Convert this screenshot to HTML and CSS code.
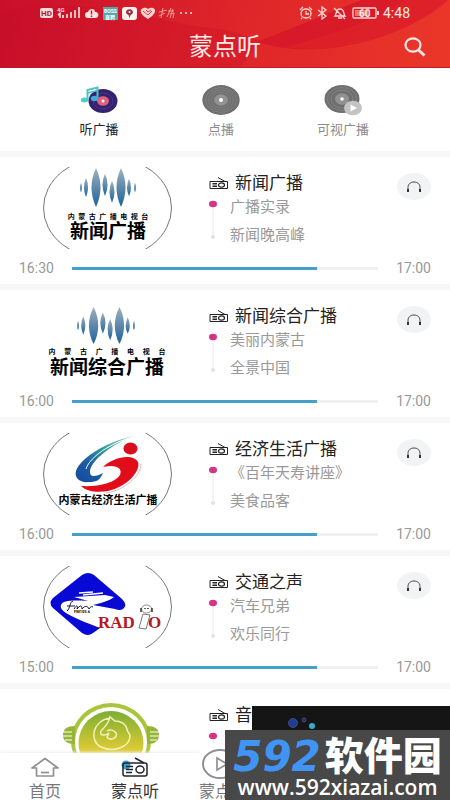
FILE: index.html
```
<!DOCTYPE html>
<html lang="zh-CN">
<head>
    <meta charset="UTF-8">
    <meta name="viewport" content="width=device-width, initial-scale=1.0">
    <title>蒙点听</title>
    <link rel="stylesheet" href="styles.css">
</head>
<body>
    <!-- shared icons -->
    <svg class="sprite" aria-hidden="true">
        <defs>
            <linearGradient id="waveFill" x1="0" y1="0" x2="0" y2="1">
                <stop offset="0" stop-color="#9fb0bd"/>
                <stop offset="1" stop-color="#1d6299"/>
            </linearGradient>
            <symbol id="radio" viewBox="0 0 20 14">
                <path d="M1 5.500H18.500V12.500H1zM9 1.500L16 5.500M3.500 7.500H8M3.500 9H8M3.500 10.500H8" fill="none" stroke="currentColor"/>
                <ellipse cx="12.500" cy="9" rx="3" ry="2.200" fill="none" stroke="currentColor" stroke-width="1.200"/>
            </symbol>
            <symbol id="headphone" viewBox="0 0 16 12">
                <path d="M2 9V6.500C2 3 4.500 1 8 1S14 3 14 6.500V9" fill="none" stroke="#444"/>
                <path d="M1 8h2v3h-2zM13 8h2v3h-2z" fill="#333"/>
            </symbol>
            <symbol id="timeline" viewBox="0 0 8 42">
                <path d="M4 5V38" stroke="#e8e8e8"/>
                <ellipse cx="4" cy="5" rx="4" ry="3.300" fill="#d63384"/>
                <circle cx="4" cy="38" r="2" fill="#e2e2e2"/>
            </symbol>
            <symbol id="wave" viewBox="0 0 58 42" preserveAspectRatio="none">
                <g fill="url(#waveFill)">
                    <path d="M2 16q2 5 0 10q-2-5 0-10z"/>
                    <path d="M7 11q4 10 0 20q-4-10 0-20z"/>
                    <path d="M17 1q9 20 0 40q-9-20 0-40z"/>
                    <path d="M26 7q5 11 0 23q-5-12 0-23z"/>
                    <path d="M33 14q5 11 0 23q-5-12 0-23z"/>
                    <path d="M42 1q9 20 0 40q-9-20 0-40z"/>
                    <path d="M50 12q4 9 0 18q-4-9 0-18z"/>
                    <path d="M56 16q2 5 0 10q-2-5 0-10z"/>
                </g>
            </symbol>
            <symbol id="frame" viewBox="0 0 129 82">
                <ellipse cx="64.500" cy="41" rx="64" ry="51.500" fill="none" stroke="#777"/>
            </symbol>
        </defs>
    </svg>

    <header class="header">
        <svg class="header-bg" viewBox="0 0 450 68" preserveAspectRatio="none" aria-hidden="true">
            <path d="M0 15C15 4 60 2 110 10S190 28 225 30L262 42L240 68H0z" fill="#c40c28" opacity=".25"/>
            <path d="M258 42C310 22 340 8 362 0H448C410 34 350 50 310 50C285 50 268 46 258 42z" fill="#d3132a" opacity=".7"/>
            <path d="M285 48C350 30 385 15 405 0H448C410 34 350 50 310 50z" fill="#e02428" opacity=".7"/>
        </svg>
        <div class="status">
            <svg width="154" height="16" viewBox="0 0 154 16">
                <rect x="1" y="3" width="13" height="10" rx="2" fill="#ffdad6"/>
                <text x="2" y="11" class="hd">HD</text>
                <text x="18" y="7" class="net">4G</text>
                <path d="M19 10l2-1.500v4.500M24 13v-3M28 13V9M32 13V7M36 13V5M40 13V2" stroke="#ffdad6" stroke-width="1.700" fill="none"/>
                <path d="M49 13a3 3 0 0 1 0-6c1-4 7-4 7 0c4-1 5 6 0 6z" fill="#ffe3e0"/>
                <path d="M52.500 5.500v4M52.500 10.500v1.500" stroke="#d21a28" stroke-width="1.500"/>
                <rect x="64" y="2" width="15" height="13" fill="#4fa9ad"/>
                <text x="65" y="8" class="boss">BOSS</text>
                <text x="66" y="14" class="boss">直聘</text>
                <rect x="83" y="2" width="15" height="13" rx="3" fill="#fff0ee"/>
                <path d="M90.500 13l-1-3a3.500 3 0 1 1 2 0z" fill="#943340"/>
                <circle cx="90.500" cy="7" r="1" fill="#fff"/>
                <path d="M109 14C95 6 105 0 109 4C114 0 122 6 109 14z" fill="#ffd3cf"/>
                <path d="M104 6l5 4l4-4M107 5l2 2l3-2" stroke="#dc3a40" fill="none"/>
                <path d="M120 7l8-2M124 3l-2 10M120 11l6-3M128 12l4-9M129 6h6M134 4l-3 9M131 9l4-1l-1 5" stroke="#f7a09a" fill="none"/>
                <path d="M141 8h2M146 8h2M151 8h2" stroke="#f7b3ad" stroke-width="2"/>
            </svg>
            <div class="status-right">
                <svg width="80" height="14" viewBox="0 0 80 14" fill="none" stroke="#ffd6d1" stroke-width="1.300">
                    <ellipse cx="7" cy="7.500" rx="5" ry="4.500"/>
                    <path d="M1 4l3-3M13 4l-3-3M7 5v3h3M3 12l-1 1M11 12l1 1"/>
                    <path d="M19 4l8 6l-4 3V1l4 3l-8 6"/>
                    <path d="M36 10c2-2 0-7 5-7s3 5 5 7zM39 12h4M35 2l11 11"/>
                    <rect x="54" y="2" width="23" height="10" rx="1"/>
                    <path d="M79 5v4" stroke-width="2"/>
                    <path d="M56 4h13v6H56z" fill="#e9776f" stroke="none"/>
                    <text x="60" y="11" class="battery">60</text>
                </svg>
                <span>4:48</span>
            </div>
        </div>
        <div class="title-bar">
            <h1>蒙点听</h1>
            <button class="search" type="button" aria-label="搜索">
                <svg width="22" height="20" viewBox="0 0 22 20" fill="none" stroke="#ffe7e3">
                    <ellipse cx="9" cy="8" rx="7.500" ry="6.700" stroke-width="2.200"/>
                    <path d="M14.500 13l6 5.500" stroke-width="3"/>
                </svg>
            </button>
        </div>
    </header>

    <nav class="tabs">
        <a class="tab active" href="#listen">
            <svg width="40" height="32" viewBox="0 0 40 32">
                <ellipse cx="24" cy="17" rx="14.500" ry="12" fill="#34216f"/>
                <ellipse cx="24" cy="17" rx="10" ry="8" fill="none" stroke="#4a3586"/>
                <ellipse cx="24" cy="17" rx="6" ry="4.800" fill="#e0607b"/>
                <circle cx="24" cy="17" r="1.500" fill="#fff"/>
                <path d="M8.500 16V6l10-2.500V14" fill="none" stroke="#4bc3c9" stroke-width="2"/>
                <path d="M8.500 9l10-2.500" stroke="#4bc3c9" stroke-width="1.500"/>
                <ellipse cx="5.500" cy="16" rx="3.700" ry="2.500" fill="#4ccfc5"/>
                <ellipse cx="15.500" cy="14.500" rx="3.700" ry="2.700" fill="#42abd5"/>
            </svg>
            <span>听广播</span>
        </a>
        <a class="tab" href="#demand">
            <svg width="40" height="32" viewBox="0 0 40 32">
                <ellipse cx="20" cy="16" rx="18.700" ry="15" fill="#6f6f6f"/>
                <g fill="none" stroke="#858585" stroke-width=".8">
                    <ellipse cx="20" cy="16" rx="15.500" ry="12.300"/>
                    <ellipse cx="20" cy="16" rx="12.500" ry="10"/>
                    <ellipse cx="20" cy="16" rx="9.500" ry="7.700"/>
                </g>
                <ellipse cx="20" cy="16" rx="7" ry="5.700" fill="#929292"/>
                <circle cx="20" cy="16" r="2" fill="#fff"/>
            </svg>
            <span>点播</span>
        </a>
        <a class="tab" href="#video">
            <svg width="40" height="32" viewBox="0 0 40 32">
                <ellipse cx="19" cy="15" rx="17.500" ry="14" fill="#6f6f6f"/>
                <g fill="none" stroke="#858585" stroke-width=".8">
                    <ellipse cx="19" cy="15" rx="14.500" ry="11.500"/>
                    <ellipse cx="19" cy="15" rx="11" ry="9"/>
                </g>
                <ellipse cx="19" cy="15" rx="7" ry="5.700" fill="#929292"/>
                <circle cx="19" cy="15" r="1.800" fill="#fff"/>
                <ellipse cx="30" cy="24" rx="9" ry="7.300" fill="#c3c3c3"/>
                <path d="M27.500 20.500l6.500 3.500l-6.500 3.500z" fill="#fff"/>
            </svg>
            <span>可视广播</span>
        </a>
    </nav>

    <main class="list">
        <article class="card">
            <div class="card-top">
                <svg class="logo" viewBox="0 0 129 82">
                    <use href="#frame"/>
                    <use href="#wave" x="36" y="0" width="58" height="41"/>
                    <text x="65" y="52" class="logo-small">内&nbsp;&nbsp;蒙&nbsp;&nbsp;古&nbsp;&nbsp;广&nbsp;&nbsp;播&nbsp;&nbsp;电&nbsp;&nbsp;视&nbsp;&nbsp;台</text>
                    <text x="65" y="71" class="logo-name">新闻广播</text>
                </svg>
                <div class="info">
                    <h2><svg class="radio"><use href="#radio"/></svg>新闻广播</h2>
                    <div class="programs">
                        <svg class="timeline"><use href="#timeline"/></svg>
                        <ul>
                            <li>广播实录</li>
                            <li>新闻晚高峰</li>
                        </ul>
                    </div>
                </div>
                <button class="play" type="button" aria-label="收听新闻广播"><svg width="16" height="12"><use href="#headphone"/></svg></button>
            </div>
            <div class="time">
                <span>16:30</span>
                <progress value="80" max="100" aria-label="播放进度"></progress>
                <span>17:00</span>
            </div>
        </article>

        <article class="card">
            <div class="card-top">
                <svg class="logo" viewBox="0 0 129 82">
                    <use href="#wave" x="33" y="6" width="60" height="39"/>
                    <text x="64" y="54" class="logo-small">内&nbsp;&nbsp;&nbsp;&nbsp;&nbsp;蒙&nbsp;&nbsp;&nbsp;&nbsp;&nbsp;古&nbsp;&nbsp;&nbsp;&nbsp;&nbsp;广&nbsp;&nbsp;&nbsp;&nbsp;&nbsp;播&nbsp;&nbsp;&nbsp;&nbsp;&nbsp;电&nbsp;&nbsp;&nbsp;&nbsp;&nbsp;视&nbsp;&nbsp;&nbsp;&nbsp;&nbsp;台</text>
                    <text x="64" y="74" class="logo-name">新闻综合广播</text>
                </svg>
                <div class="info">
                    <h2><svg class="radio"><use href="#radio"/></svg>新闻综合广播</h2>
                    <div class="programs">
                        <svg class="timeline"><use href="#timeline"/></svg>
                        <ul>
                            <li>美丽内蒙古</li>
                            <li>全景中国</li>
                        </ul>
                    </div>
                </div>
                <button class="play" type="button" aria-label="收听新闻综合广播"><svg width="16" height="12"><use href="#headphone"/></svg></button>
            </div>
            <div class="time">
                <span>16:00</span>
                <progress value="80" max="100" aria-label="播放进度"></progress>
                <span>17:00</span>
            </div>
        </article>

        <article class="card">
            <div class="card-top">
                <svg class="logo" viewBox="0 0 129 82">
                    <defs>
                        <linearGradient id="swoosh" x1="0" y1="1" x2="1" y2="0">
                            <stop offset="0" stop-color="#124a9c"/>
                            <stop offset=".3" stop-color="#1c5ca5"/>
                            <stop offset=".6" stop-color="#2f9a9a"/>
                            <stop offset="1" stop-color="#b9d4dc"/>
                        </linearGradient>
                    </defs>
                    <use href="#frame"/>
                    <path d="M90 3C60 10 37 26 33 38C31 45 37 50 46 49C54 49 57 47 60 40C54 43 48 45 47 40C46 30 64 14 90 3z" fill="url(#swoosh)"/>
                    <path d="M86 5C62 13 46 26 43 36" fill="none" stroke="#fff"/>
                    <ellipse cx="87.500" cy="15.500" rx="7" ry="6" fill="#dc0c1a"/>
                    <path d="M60 34C70 24 90 20 95 29C98 38 84 54 65 58C53 60 43 58 38 53C55 54 72 50 77 42C80 35 73 31 60 34z" fill="#e20d1b"/>
                    <path d="M98 31C98 43 82 57 63 60" fill="none" stroke="#dfb9ba"/>
                    <text x="65" y="71" class="logo-eco">内蒙古经济生活广播</text>
                </svg>
                <div class="info">
                    <h2><svg class="radio"><use href="#radio"/></svg>经济生活广播</h2>
                    <div class="programs">
                        <svg class="timeline"><use href="#timeline"/></svg>
                        <ul>
                            <li>《百年天寿讲座》</li>
                            <li>美食品客</li>
                        </ul>
                    </div>
                </div>
                <button class="play" type="button" aria-label="收听经济生活广播"><svg width="16" height="12"><use href="#headphone"/></svg></button>
            </div>
            <div class="time">
                <span>16:00</span>
                <progress value="80" max="100" aria-label="播放进度"></progress>
                <span>17:00</span>
            </div>
        </article>

        <article class="card">
            <div class="card-top">
                <svg class="logo" viewBox="0 0 129 82">
                    <use href="#frame"/>
                    <path d="M39 9Q45 5 51 9L79 33Q85 39 80 43Q77 45 72 43L50 39C58 37 66 35 71 31L62 29L31 31L45 35C30 34 20 34 18 39C16 45 26 50 57 62L50 67Q45 71 39 67L10 42Q5 37 10 32z" fill="#0909d6"/>
                    <path d="M36 27l14-1M40 29l20-2" stroke="#fff" stroke-width="1.500"/>
                    <path d="M24 45C27 43 27 35 30 35M24 40h8M31 43c3-5 4-3 3 0c3-4 5-4 5 0c3-4 6-3 7 0c2-2 1-3 4-2" fill="none" stroke="#151538"/>
                    <text x="31" y="47" class="logo-freq">FM105.6</text>
                    <text x="55" y="62" class="logo-radio">RAD</text>
                    <text x="105" y="62" class="logo-radio">O</text>
                    <path d="M100 48l7 1l-4 14l-7-1z" fill="#fff" stroke="#777"/>
                    <ellipse cx="103.500" cy="43" rx="5" ry="4" fill="#fff" stroke="#888"/>
                    <path d="M98 42v4M109 42v4M102 42v1M105 42v1" stroke="#333" stroke-width="1.500"/>
                </svg>
                <div class="info">
                    <h2><svg class="radio"><use href="#radio"/></svg>交通之声</h2>
                    <div class="programs">
                        <svg class="timeline"><use href="#timeline"/></svg>
                        <ul>
                            <li>汽车兄弟</li>
                            <li>欢乐同行</li>
                        </ul>
                    </div>
                </div>
                <button class="play" type="button" aria-label="收听交通之声"><svg width="16" height="12"><use href="#headphone"/></svg></button>
            </div>
            <div class="time">
                <span>15:00</span>
                <progress value="80" max="100" aria-label="播放进度"></progress>
                <span>17:00</span>
            </div>
        </article>

        <article class="card">
            <div class="card-top">
                <svg class="logo" viewBox="0 0 129 82">
                    <defs>
                        <linearGradient id="music" x1="0" y1="0" x2="0" y2="1">
                            <stop offset="0" stop-color="#7cae35"/>
                            <stop offset=".6" stop-color="#dcca34"/>
                        </linearGradient>
                    </defs>
                    <ellipse cx="68" cy="42" rx="40" ry="38" fill="#a9c63a"/>
                    <ellipse cx="68" cy="43" rx="36" ry="35" fill="#fff"/>
                    <ellipse cx="68" cy="44" rx="32.500" ry="32" fill="url(#music)"/>
                    <path d="M32 27C24 27 20 30 20 36S24 45 32 45zM104 27C112 27 116 30 116 36S112 45 104 45z" fill="#94b535"/>
                    <path d="M20 33h9M20 37h9M22 41h7M107 33h9M107 37h9M107 41h7" stroke="#fff"/>
                    <path d="M67 19C49 22 46 42 58 48C70 54 86 48 87 38C88 35 84 34 84 30C83 25 78 22 72 22L67 18C66 24 61 29 58 32C56 37 62 37 66 34L64 38C68 43 75 38 73 34C71 31 67 30 64 32" fill="none" stroke="#f2f3b4" stroke-width="1.500"/>
                </svg>
                <div class="info">
                    <h2><svg class="radio"><use href="#radio"/></svg>音</h2>
                    <div class="programs">
                        <svg class="timeline"><use href="#timeline"/></svg>
                    </div>
                </div>
            </div>
        </article>
    </main>

    <nav class="bottom">
        <a href="#home">
            <svg width="28" height="22" viewBox="0 0 28 22" fill="none" stroke="#8f8f95" stroke-width="1.700">
                <path d="M1 12L14 2.500L27 12H22.500V20H5.500V12z" stroke-linejoin="round"/>
                <path d="M10 16.500h8"/>
            </svg>
            <span>首页</span>
        </a>
        <a class="active" href="#listen">
            <svg width="28" height="22" viewBox="0 0 28 22" fill="none" stroke="#20242c" stroke-width="1.500">
                <circle cx="5" cy="9" r="4.500" fill="#3c9fd6" stroke="none"/>
                <rect x="2" y="7" width="24" height="13" rx="2"/>
                <path d="M14 2l9 5M5 10.500h7M5 13.500h7M5 16.500h6"/>
                <ellipse cx="19" cy="13.500" rx="4" ry="3.500"/>
            </svg>
            <span>蒙点听</span>
        </a>
        <a class="center" href="#play">
            <svg width="64" height="48" viewBox="0 0 64 48">
                <ellipse cx="32" cy="24" rx="30" ry="24" fill="#fff"/>
                <ellipse cx="27" cy="23" rx="17" ry="14" fill="none" stroke="#8f9095" stroke-width="2"/>
                <path d="M24 17l10 6l-10 6z" fill="none" stroke="#8f9095" stroke-width="1.700"/>
            </svg>
            <span>蒙点</span>
        </a>
    </nav>

    <aside class="watermark">
        <div class="dark">
            <svg width="40" height="24" viewBox="0 0 40 24">
                <circle cx="13" cy="17" r="4.500" fill="#1d3d99" stroke="#444c73"/>
                <circle cx="24" cy="14" r="2" fill="#28285b" stroke="#4d4782"/>
                <circle cx="32" cy="20" r="3" fill="#35acc8"/>
            </svg>
        </div>
        <div class="brand">
            <p class="name"><b>592</b>软件园</p>
            <p class="url">www.592xiazai.com</p>
        </div>
    </aside>
</body>
</html>
```
FILE: styles.css
```
* {
    box-sizing: border-box;
}

body {
    display: flex;
    flex-direction: column;
    position: relative;
    height: 100vh;
    margin: 0;
    overflow: hidden;
    background-color: #f7f7f7;
    color: #222;
    font-family: Roboto, "Noto Sans CJK SC", sans-serif;
    font-weight: 400;
}

h1, h2, p, ul {
    margin: 0;
    padding: 0;
    font-weight: 400;
}

ul {
    list-style: none;
}

a {
    color: inherit;
    text-decoration: none;
}

button {
    border: none;
    padding: 0;
}

svg {
    display: block;
    flex-shrink: 0;
}

.sprite {
    position: absolute;
    width: 0;
    height: 0;
}

/* header */
.header {
    position: relative;
    flex-shrink: 0;
    height: 68px;
    border-bottom: 1px solid #c2182a;
    background: linear-gradient(100deg, #c90f2b, #de2429 50%, #ea3729);
    color: #ffe9e6;
}

.header-bg {
    position: absolute;
    width: 100%;
    height: 100%;
}

.status {
    display: flex;
    position: relative;
    justify-content: space-between;
    align-items: center;
    height: 26px;
    padding: 0 40px 0 39px;
}

.status-right {
    display: flex;
    align-items: center;
    gap: 4px;
    font-size: 14px;
}

.hd {
    fill: #a92230;
    font-size: 8px;
    font-weight: 700;
}

.net {
    fill: #ffdad6;
    font-size: 6px;
    font-weight: 700;
}

.boss {
    fill: #fff;
    font-size: 5px;
    font-weight: 700;
}

.battery {
    fill: #ffe9e6;
    stroke: none;
    font-size: 10px;
    font-weight: 700;
}

.title-bar {
    display: grid;
    position: relative;
    grid-template-columns: 1fr auto 1fr;
    align-items: center;
    height: 42px;
    padding: 0 24px;
}

.title-bar h1 {
    grid-column: 2;
    font-size: 24px;
    line-height: 42px;
}

.search {
    justify-self: end;
    background: none;
}

/* tabs */
.tabs {
    display: grid;
    flex-shrink: 0;
    grid-template-columns: repeat(3, 1fr);
    height: 83px;
    padding: 16px 46px 0 38px;
    background-color: #fff;
    color: #8c8c8c;
}

.tab {
    display: flex;
    flex-direction: column;
    align-items: center;
    gap: 4px;
    font-size: 13px;
    line-height: 20px;
}

.tab.active {
    color: #222;
}

/* channel list */
.list {
    display: flex;
    flex: 1;
    flex-direction: column;
    gap: 6px;
    min-height: 0;
    padding-top: 6px;
    overflow: hidden;
}

.card {
    flex-shrink: 0;
    padding: 10px 19px 6px;
    background-color: #fff;
}

.card-top {
    display: flex;
    align-items: flex-start;
    padding-left: 24px;
}

.logo {
    width: 129px;
    height: 82px;
    margin-right: 37px;
}

.logo text {
    text-anchor: middle;
    font-weight: 700;
}

.logo .logo-small {
    font-size: 7px;
}

.logo-name {
    font-size: 19px;
}

.logo-eco {
    font-size: 11px;
}

.logo .logo-freq {
    text-anchor: start;
    font-size: 4px;
}

.logo .logo-radio {
    fill: #b3191d;
    text-anchor: start;
    font-family: "Liberation Serif", serif;
    font-size: 17px;
}

.info {
    flex: 1;
    padding-top: 6px;
}

.info h2 {
    display: flex;
    gap: 6px;
    align-items: center;
    height: 20px;
    font-size: 17px;
    line-height: 20px;
    white-space: nowrap;
}

.radio {
    width: 20px;
    height: 14px;
}

.programs {
    display: flex;
    gap: 13px;
}

.timeline {
    width: 8px;
    height: 42px;
    margin-top: 6px;
}

.programs li {
    color: #999;
    font-size: 15px;
    line-height: 28px;
    white-space: nowrap;
}

.play {
    display: flex;
    justify-content: center;
    align-items: center;
    width: 34px;
    height: 27px;
    margin-top: 6px;
    border-radius: 50%;
    background-color: #f2f3f4;
}

.time {
    display: flex;
    align-items: center;
    gap: 18px;
    height: 20px;
    margin-top: 9px;
    color: #999;
    font-size: 14px;
}

progress {
    flex: 1;
    width: 0;
    height: 3px;
    border: none;
    background-color: #f0f0f0;
    appearance: none;
}

progress::-webkit-progress-bar {
    background-color: #f0f0f0;
}

progress::-webkit-progress-value {
    background-color: #449fc9;
}

/* bottom navigation */
.bottom {
    display: grid;
    position: relative;
    flex-shrink: 0;
    grid-template-columns: repeat(5, 1fr);
    height: 47px;
    padding-top: 3px;
    background-color: #fff;
    box-shadow: 0 -1px 3px #eee;
    color: #77777c;
    font-size: 16px;
    line-height: 17px;
}

.bottom a {
    display: flex;
    flex-direction: column;
    align-items: center;
    gap: 5px;
}

.bottom .active {
    color: #333;
}

.bottom .center svg {
    margin: -15px 0 -11px;
}

.center span {
    width: 52px;
}

/* site mark over the page */
.watermark {
    position: absolute;
    right: 0;
    bottom: 0;
    width: 50%;
}

.dark {
    height: 24px;
    margin-left: 27px;
    padding-left: 28px;
    background-color: #151515;
}

.brand {
    height: 70px;
    padding-top: 8px;
    background-color: #484848;
    color: #fff;
    text-align: center;
}

.name {
    display: flex;
    justify-content: center;
    align-items: center;
    gap: 4px;
    height: 38px;
    font-size: 39px;
    font-weight: 900;
    line-height: 38px;
}

.name b {
    color: #4095f4;
    font-family: "DejaVu Sans", sans-serif;
    font-size: 42px;
    font-style: italic;
}

.url {
    font-family: "Open Sans", sans-serif;
    font-size: 21px;
    font-weight: 600;
    line-height: 22px;
}
```
